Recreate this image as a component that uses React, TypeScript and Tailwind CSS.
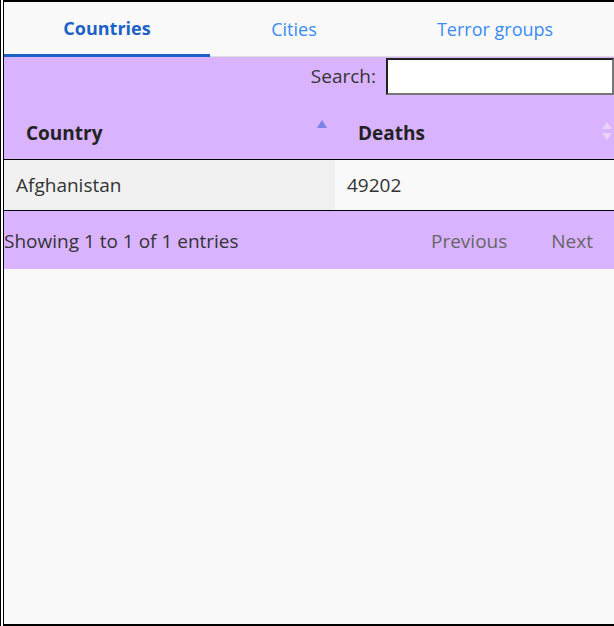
import React from 'react';

const rows = [{ country: 'Afghanistan', deaths: 49202 }];

const App: React.FC = () => {
  return (
    <div className="w-[614px] h-[626px] bg-white flex" style={{ fontFamily: '"Open Sans", "Noto Sans", sans-serif' }}>
      <div className="w-[1px] bg-black" />
      <div className="w-[2px] bg-white" />
      <div className="flex-1 flex flex-col border-l border-t-2 border-b-2 border-black bg-[#f9f9f9]">
        {/* Tabs */}
        <div className="flex h-[55px] border-b border-[#dddddd] text-[18px]">
          <div className="w-[206px] flex items-center justify-center font-bold text-[#1c62c7] border-b-[3px] border-[#1c62c7] -mb-px">
            Countries
          </div>
          <div className="w-[168px] flex items-center justify-center text-[#3b8bf4]">Cities</div>
          <div className="w-[234px] flex items-center justify-center text-[#3b8bf4]">Terror groups</div>
        </div>

        {/* Table block */}
        <div className="bg-[#dab3ff] text-[19px] text-[#333333]">
          <div className="flex justify-end items-center h-[38px]">
            <span className="mr-[10px]">Search:</span>
            <input
              className="w-[228px] h-[37px] bg-white border-2 border-t-[#222] border-l-[#222] border-b-[#767676] border-r-[#767676] outline-none"
              type="text"
            />
          </div>
          <div className="flex h-[65px] border-b border-black font-bold text-[#222]">
            <div className="w-[331px] flex items-end justify-between pl-[22px] pr-[8px] pb-[12px]">
              <span>Country</span>
              <svg width="10" height="8" viewBox="0 0 10 8" className="mb-[19px]">
                <polygon points="5,0 10,8 0,8" fill="#7b82e6" />
              </svg>
            </div>
            <div className="flex-1 flex items-end justify-between pl-[23px] pr-[2px] pb-[12px]">
              <span>Deaths</span>
              <svg width="10" height="20" viewBox="0 0 10 20" className="mb-[6px]">
                <polygon points="5,1 10,8 0,8" fill="#e6d4f6" />
                <polygon points="5,19 10,12 0,12" fill="#e6d4f6" />
              </svg>
            </div>
          </div>
        </div>

        {rows.map((r) => (
          <div key={r.country} className="flex h-[51px] border-b border-black text-[19px] text-[#333]">
            <div className="w-[331px] bg-[#f1f1f1] flex items-center pl-[12px]">{r.country}</div>
            <div className="flex-1 bg-[#f9f9f9] flex items-center pl-[12px]">{r.deaths}</div>
          </div>
        ))}

        <div className="bg-[#dab3ff] h-[58px] flex items-center text-[19px]">
          <span className="text-[#333] mt-[2px]">Showing 1 to 1 of 1 entries</span>
          <div className="ml-auto flex text-[#666] mt-[2px]">
            <span className="mr-[44px]">Previous</span>
            <span className="mr-[21px]">Next</span>
          </div>
        </div>

        <div className="flex-1" />
      </div>
    </div>
  );
};

export default App;
